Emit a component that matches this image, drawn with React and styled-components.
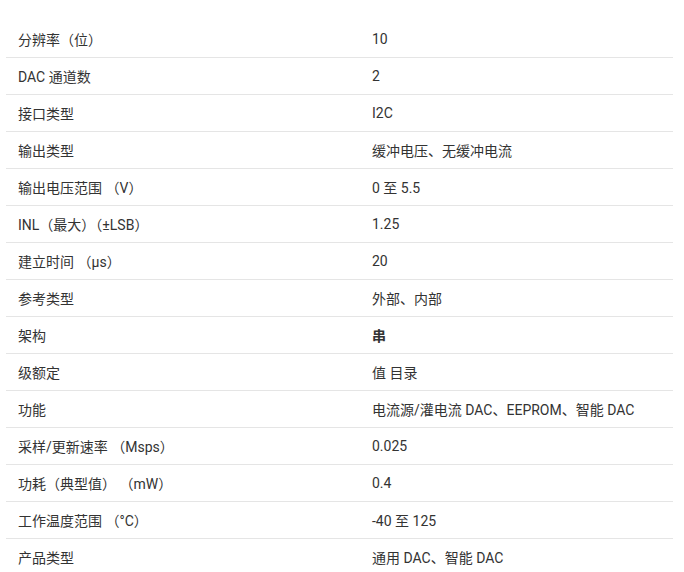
import React from 'react';
import styled, { createGlobalStyle } from 'styled-components';

const GlobalStyle = createGlobalStyle`
  body {
    margin: 0;
    background: #ffffff;
    font-family: Roboto, "Noto Sans CJK SC", sans-serif;
  }
`;

const SpecsContainer = styled.div`
  width: 667px;
  padding: 21px 0 0 6px;
`;

const SpecTable = styled.table`
  width: 100%;
  border-collapse: collapse;
  color: #333333;
  font-size: 14px;
`;

const SpecRow = styled.tr`
  border-bottom: 1px solid #e5e5e5;
`;

const LabelCell = styled.td`
  width: 330px;
  height: 36px;
  padding: 0 12px;
  vertical-align: middle;
`;

const ValueCell = styled.td`
  height: 36px;
  padding: 0 12px;
  vertical-align: middle;
  font-weight: ${props => (props.$strong ? 700 : 400)};
`;

function App() {
  const specs = [
    ['分辨率（位）', '10'],
    ['DAC 通道数', '2'],
    ['接口类型', 'I2C'],
    ['输出类型', '缓冲电压、无缓冲电流'],
    ['输出电压范围 （V）', '0 至 5.5'],
    ['INL（最大）（±LSB）', '1.25'],
    ['建立时间 （µs）', '20'],
    ['参考类型', '外部、内部'],
    ['架构', '串', true],
    ['级额定', '值 目录'],
    ['功能', '电流源/灌电流 DAC、EEPROM、智能 DAC'],
    ['采样/更新速率 （Msps）', '0.025'],
    ['功耗（典型值） （mW）', '0.4'],
    ['工作温度范围 （°C）', '-40 至 125'],
    ['产品类型', '通用 DAC、智能 DAC'],
  ];

  return (
    <>
      <GlobalStyle />
      <SpecsContainer>
        <SpecTable>
          <tbody>
            {specs.map(([label, value, strong]) => (
              <SpecRow key={label}>
                <LabelCell>{label}</LabelCell>
                <ValueCell $strong={strong}>{value}</ValueCell>
              </SpecRow>
            ))}
          </tbody>
        </SpecTable>
      </SpecsContainer>
    </>
  );
}

export default App;
